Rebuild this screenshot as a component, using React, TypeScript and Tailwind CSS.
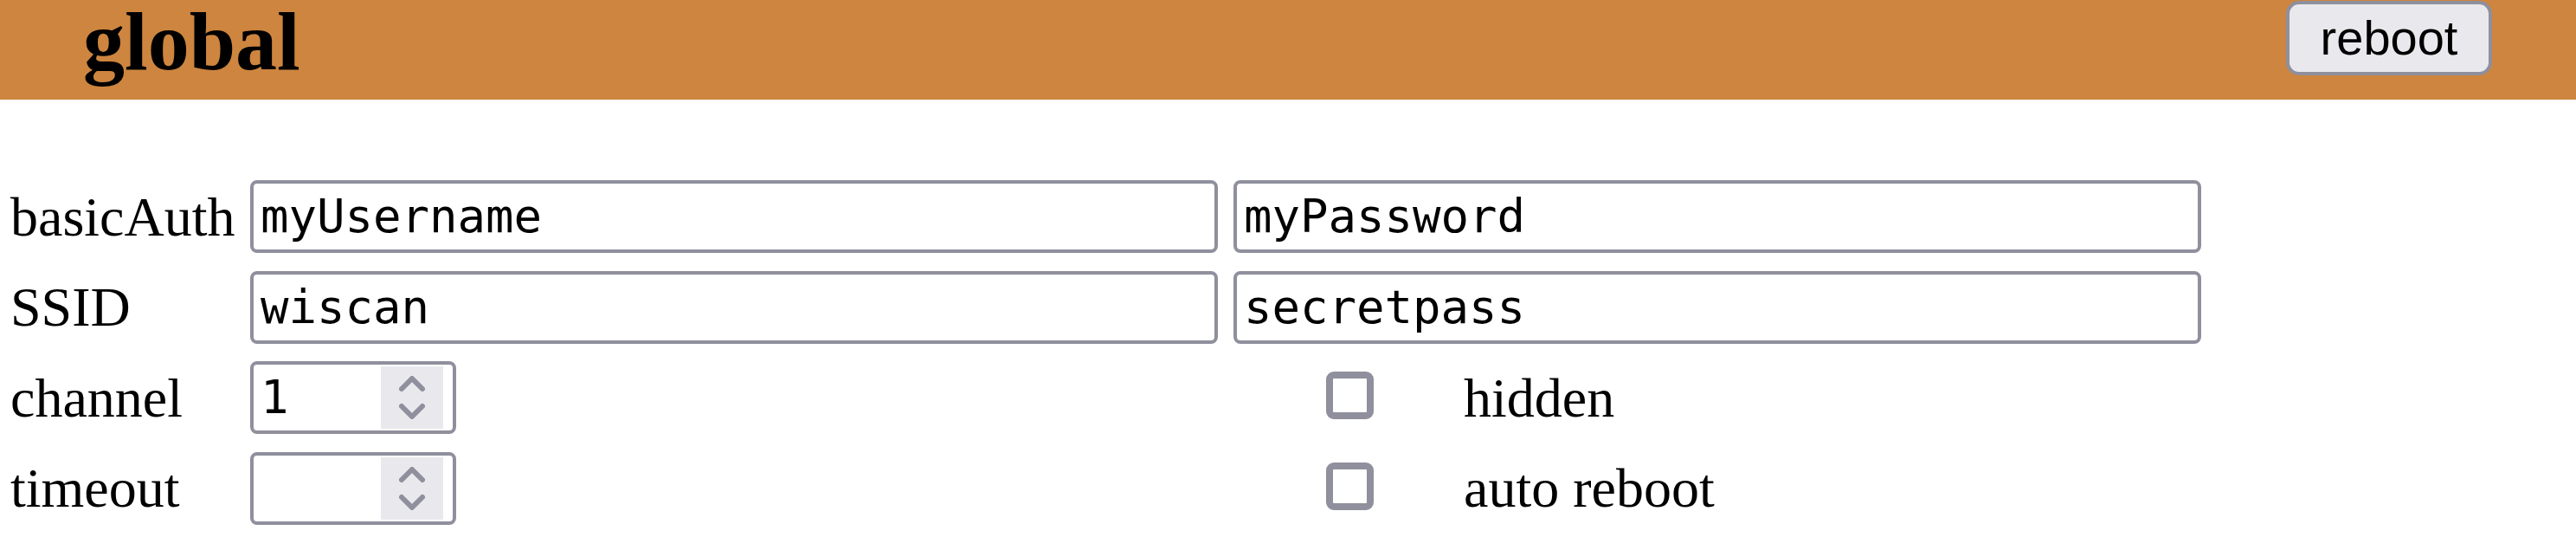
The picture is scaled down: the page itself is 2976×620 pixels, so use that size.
import React from "react";

function Chevron({ up }: { up: boolean }) {
  return (
    <svg width="30" height="18" viewBox="0 0 30 18" className="block">
      <path
        d={up ? "M3 15 L15 3 L27 15" : "M3 3 L15 15 L27 3"}
        fill="none"
        stroke="#8f8f9d"
        strokeWidth="6"
        strokeLinecap="round"
        strokeLinejoin="round"
      />
    </svg>
  );
}

function TextField({ value }: { value: string }) {
  return (
    <div className="h-[84px] w-full rounded-[8px] border-[4px] border-[#8f8f9d] bg-white flex items-center px-[8px]">
      <input
        readOnly
        value={value}
        className="w-full bg-transparent outline-none text-black text-[54px] leading-[62px] font-['DejaVu_Sans_Mono',monospace]"
      />
    </div>
  );
}

function NumberField({ value }: { value: string }) {
  return (
    <div className="h-[84px] w-[238px] rounded-[8px] border-[4px] border-[#8f8f9d] bg-white flex items-center pl-[8px] pr-[11px]">
      <input
        readOnly
        value={value}
        className="min-w-0 flex-1 bg-transparent outline-none text-black text-[54px] leading-[62px] font-['DejaVu_Sans_Mono',monospace]"
      />
      <div className="w-[72px] h-[72px] bg-[#e9e9ed] flex flex-col items-center pt-[11px] gap-[14px]">
        <Chevron up={true} />
        <Chevron up={false} />
      </div>
    </div>
  );
}

function Label({ children }: { children: React.ReactNode }) {
  return (
    <div className="h-[84px] flex items-center text-[64px] leading-[71px] text-black whitespace-nowrap">
      {children}
    </div>
  );
}

function Check({ label }: { label: string }) {
  return (
    <div className="h-[84px] flex items-center">
      <div className="ml-[107px] mb-[5px] w-[55px] h-[55px] rounded-[9px] border-[8px] border-[#8f8f9d] bg-white" />
      <div className="ml-[104px] text-[64px] leading-[71px] text-black whitespace-nowrap">{label}</div>
    </div>
  );
}

export default function App() {
  return (
    <div className="w-[2976px] h-[620px] bg-white font-['Liberation_Serif',serif] text-black overflow-hidden">
      <header className="h-[115px] bg-[#cd853f] flex items-start justify-between pl-[96px] pr-[97px]">
        <h1 className="m-0 -mt-[7px] text-[96px] leading-[110px] font-bold font-['Liberation_Serif',serif]">global</h1>
        <button className="mt-[1px] w-[238px] h-[86px] rounded-[15px] border-[4px] border-[#8f8f9d] bg-[#e9e9ed] text-black text-[56px] leading-[64px] font-['Liberation_Sans',Arial,sans-serif] flex items-center justify-center">
          reboot
        </button>
      </header>
      <div className="mt-[93px] pl-[12px] grid grid-cols-[259px_1118px_1118px] gap-x-[18px] gap-y-[20.5px]">
        <Label>basicAuth</Label>
        <TextField value="myUsername" />
        <TextField value="myPassword" />

        <Label>SSID</Label>
        <TextField value="wiscan" />
        <TextField value="secretpass" />

        <Label>channel</Label>
        <NumberField value="1" />
        <Check label="hidden" />

        <Label>timeout</Label>
        <NumberField value="" />
        <Check label="auto reboot" />
      </div>
    </div>
  );
}
